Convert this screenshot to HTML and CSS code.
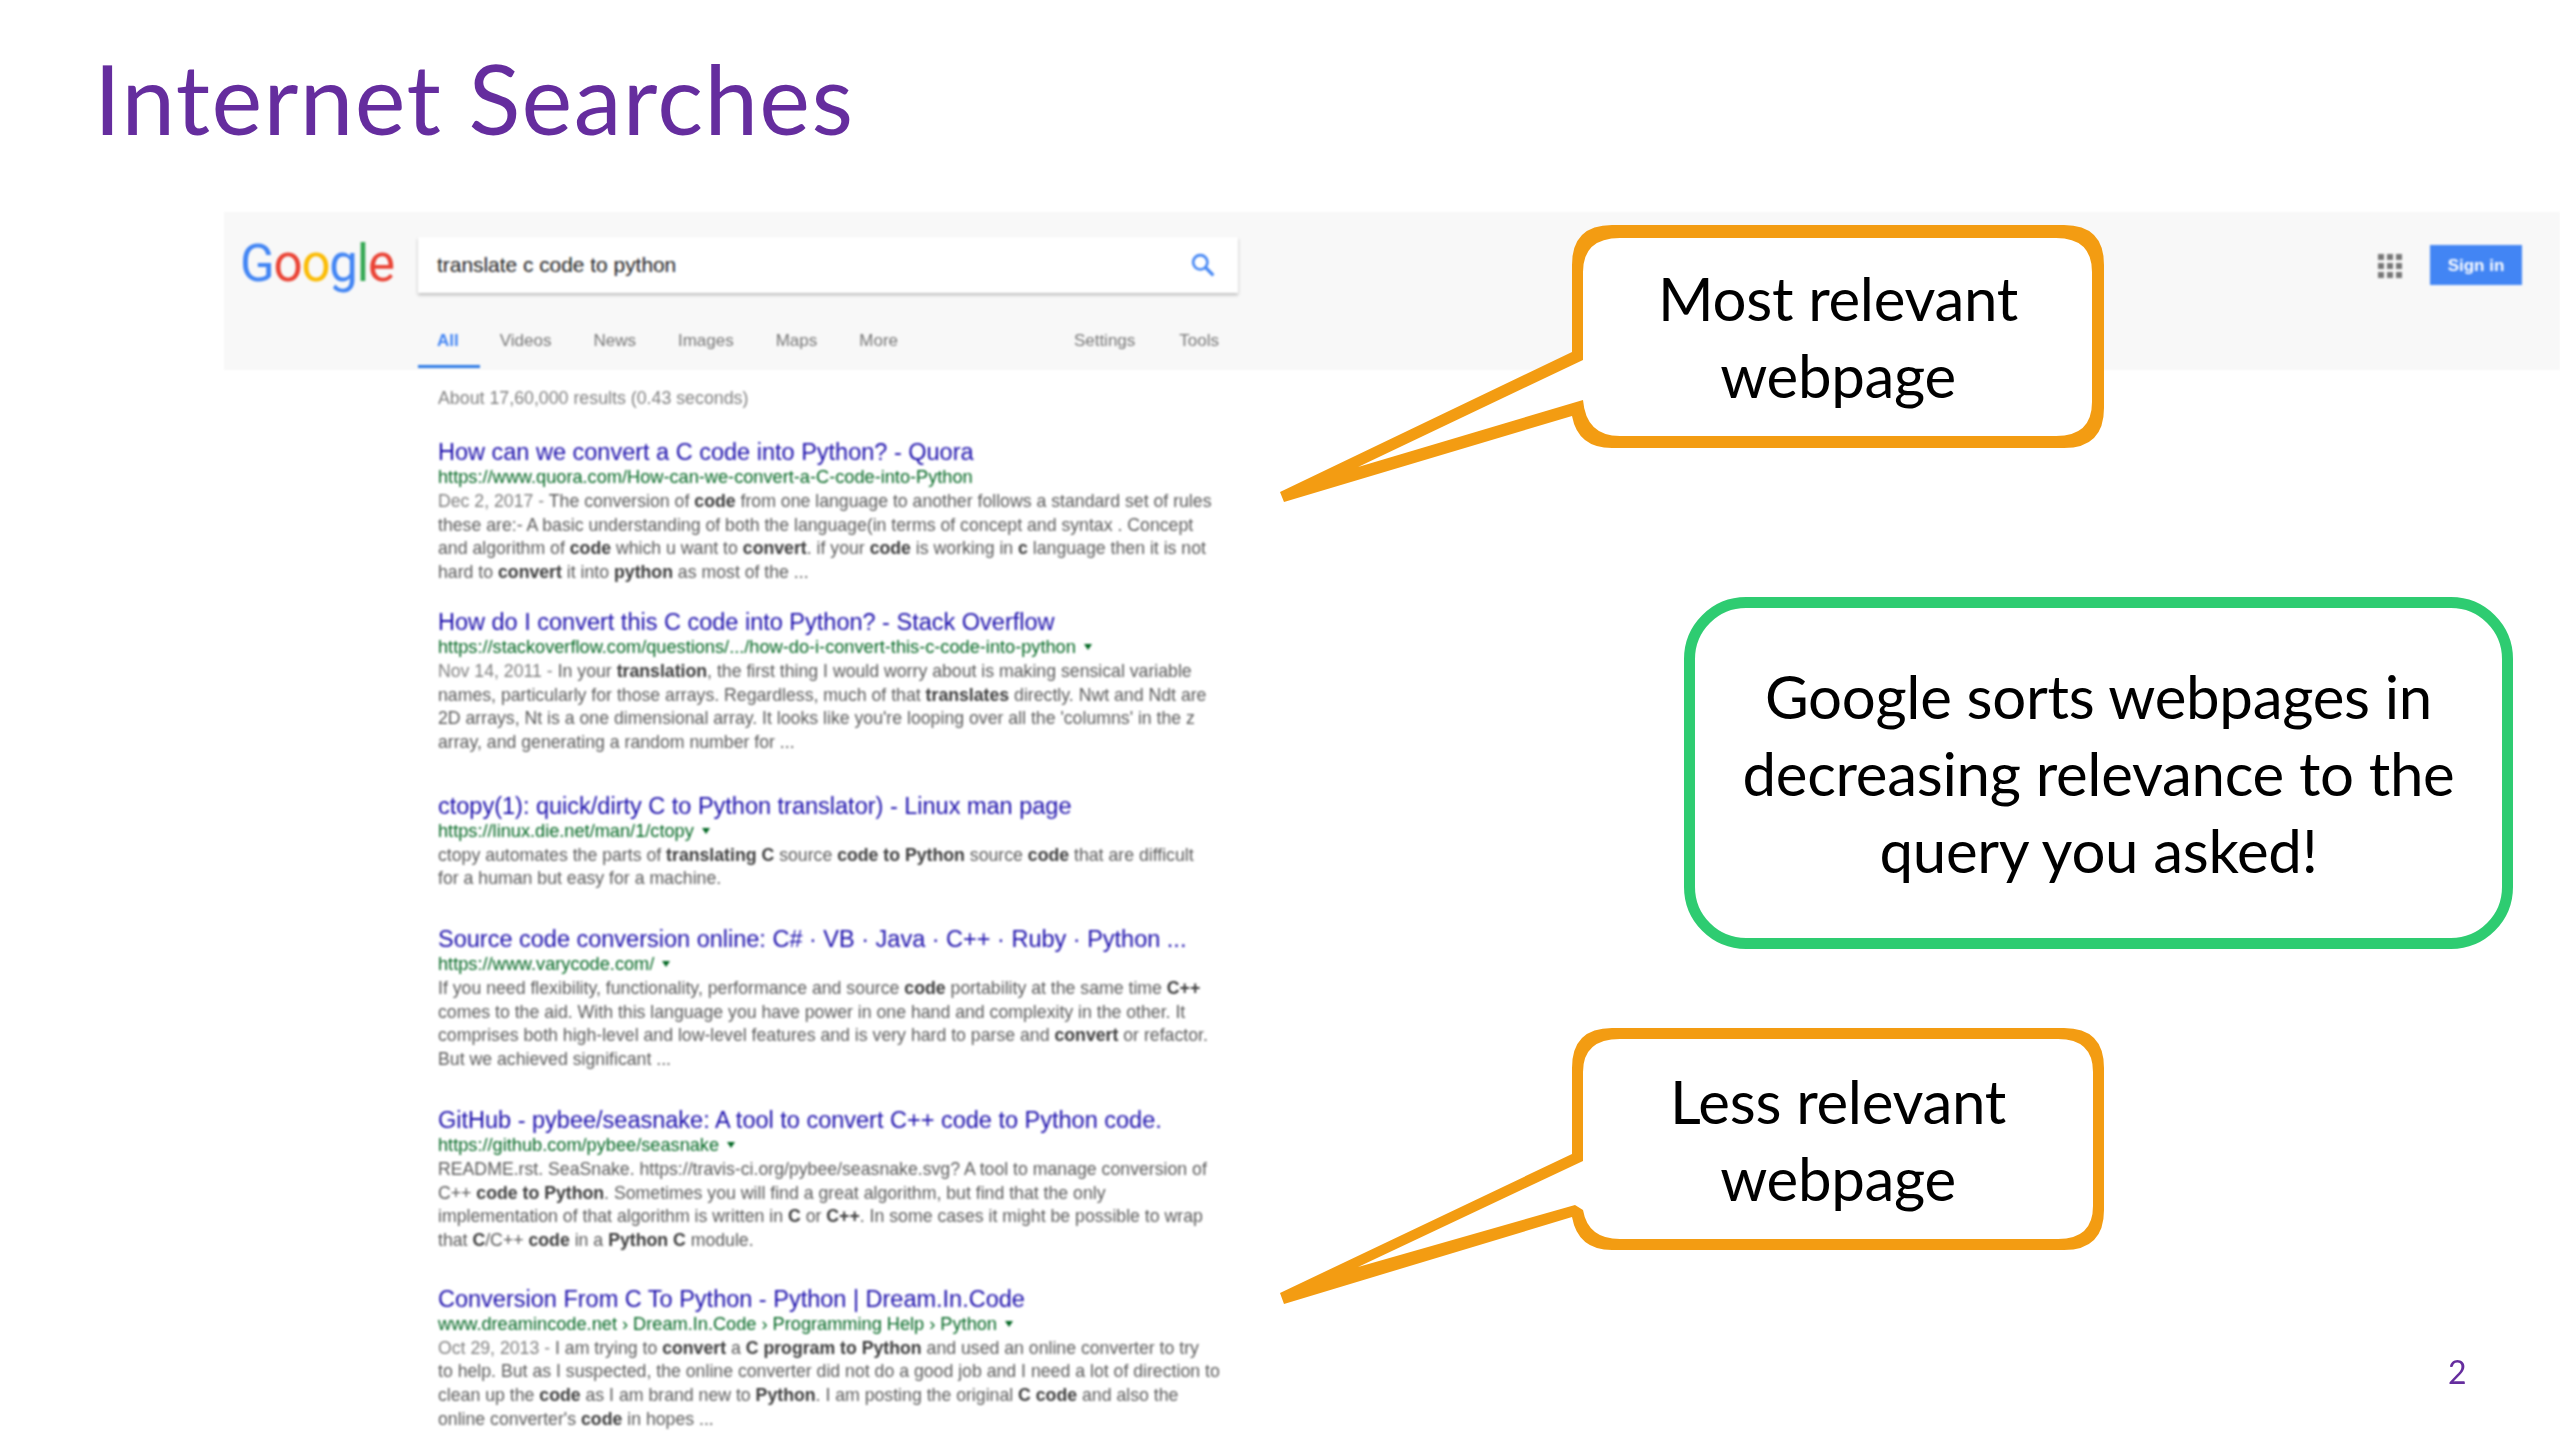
FILE: index.html
```html
<!DOCTYPE html>
<html lang="en">
<head>
<meta charset="utf-8">
<title>Internet Searches</title>
<link rel="stylesheet" href="styles.css">
</head>
<body>
<main class="slide">
  <h1 class="slide-title">Internet Searches</h1>
  <section class="shot">
    <header class="serp-head">
      <div class="top-row">
        <div class="logo"><span class="g-blue">G</span><span class="g-red">o</span><span class="g-yellow">o</span><span class="g-blue">g</span><span class="g-green">l</span><span class="g-red">e</span></div>
        <div class="search-box">
          <span class="query">translate c code to python</span>
          <svg class="search-icon" viewBox="0 0 24 24" width="26" height="26"><circle cx="9.5" cy="9.5" r="6.6" fill="none" stroke="#4285f4" stroke-width="2.4"/><path d="M14.5 14.5L21.5 21.5" stroke="#4285f4" stroke-width="3" fill="none"/></svg>
        </div>
        <div class="apps">
          <i></i><i></i><i></i><i></i><i></i><i></i><i></i><i></i><i></i>
        </div>
        <div class="sign-in">Sign in</div>
      </div>
      <nav class="tabs">
        <span class="tab tab-active">All</span>
        <span class="tab">Videos</span>
        <span class="tab">News</span>
        <span class="tab">Images</span>
        <span class="tab">Maps</span>
        <span class="tab">More</span>
        <span class="tab tab-settings">Settings</span>
        <span class="tab tab-last">Tools</span>
      </nav>
    </header>
    <div class="results">
      <p class="count">About 17,60,000 results (0.43 seconds)</p>
      <article class="result result-first">
        <h2 class="r-title">How can we convert a C code into Python? - Quora</h2>
        <div class="r-url">https://www.quora.com/How-can-we-convert-a-C-code-into-Python</div>
        <p class="r-snip"><span class="r-date">Dec 2, 2017 - </span>The conversion of <b>code</b> from one language to another follows a standard set of rules<br>these are:- A basic understanding of both the language(in terms of concept and syntax . Concept<br>and algorithm of <b>code</b> which u want to <b>convert</b>. if your <b>code</b> is working in <b>c</b> language then it is not<br>hard to <b>convert</b> it into <b>python</b> as most of the ...</p>
      </article>
      <article class="result result-second">
        <h2 class="r-title">How do I convert this C code into Python? - Stack Overflow</h2>
        <div class="r-url">https://stackoverflow.com/questions/.../how-do-i-convert-this-c-code-into-python<span class="caret"></span></div>
        <p class="r-snip"><span class="r-date">Nov 14, 2011 - </span>In your <b>translation</b>, the first thing I would worry about is making sensical variable<br>names, particularly for those arrays. Regardless, much of that <b>translates</b> directly. Nwt and Ndt are<br>2D arrays, Nt is a one dimensional array. It looks like you're looping over all the 'columns' in the z<br>array, and generating a random number for ...</p>
      </article>
      <article class="result">
        <h2 class="r-title">ctopy(1): quick/dirty C to Python translator) - Linux man page</h2>
        <div class="r-url">https://linux.die.net/man/1/ctopy<span class="caret"></span></div>
        <p class="r-snip">ctopy automates the parts of <b>translating C</b> source <b>code to Python</b> source <b>code</b> that are difficult<br>for a human but easy for a machine.</p>
      </article>
      <article class="result">
        <h2 class="r-title">Source code conversion online: C# · VB · Java · C++ · Ruby · Python ...</h2>
        <div class="r-url">https://www.varycode.com/<span class="caret"></span></div>
        <p class="r-snip">If you need flexibility, functionality, performance and source <b>code</b> portability at the same time <b>C++</b><br>comes to the aid. With this language you have power in one hand and complexity in the other. It<br>comprises both high-level and low-level features and is very hard to parse and <b>convert</b> or refactor.<br>But we achieved significant ...</p>
      </article>
      <article class="result">
        <h2 class="r-title">GitHub - pybee/seasnake: A tool to convert C++ code to Python code.</h2>
        <div class="r-url">https://github.com/pybee/seasnake<span class="caret"></span></div>
        <p class="r-snip">README.rst. SeaSnake. https://travis-ci.org/pybee/seasnake.svg? A tool to manage conversion of<br>C++ <b>code to Python</b>. Sometimes you will find a great algorithm, but find that the only<br>implementation of that algorithm is written in <b>C</b> or <b>C++</b>. In some cases it might be possible to wrap<br>that <b>C</b>/C++ <b>code</b> in a <b>Python C</b> module.</p>
      </article>
      <article class="result">
        <h2 class="r-title">Conversion From C To Python - Python | Dream.In.Code</h2>
        <div class="r-url">www.dreamincode.net › Dream.In.Code › Programming Help › Python<span class="caret"></span></div>
        <p class="r-snip"><span class="r-date">Oct 29, 2013 - </span>I am trying to <b>convert</b> a <b>C program to Python</b> and used an online converter to try<br>to help. But as I suspected, the online converter did not do a good job and I need a lot of direction to<br>clean up the <b>code</b> as I am brand new to <b>Python</b>. I am posting the original <b>C code</b> and also the<br>online converter's <b>code</b> in hopes ...</p>
      </article>
    </div>
  </section>

  <aside class="callout callout-most">
    <svg class="callout-shape" viewBox="1270 215 850 300" width="850" height="300">
      <path class="shape-line" d="M1612 225H2064Q2104 225 2104 265V408Q2104 448 2064 448H1612Q1578 448 1572 416L1284 502L1280 492L1572 352V265Q1572 225 1612 225Z"/>
      <path class="shape-fill" d="M1620 238H2056Q2092 238 2092 272V402Q2092 436 2056 436H1620Q1586 436 1583 400L1358 467L1583 360V272Q1583 238 1620 238Z"/>
    </svg>
    <p class="callout-text">Most relevant<br>webpage</p>
  </aside>

  <aside class="callout-box">
    <p class="callout-box-text">Google sorts webpages in<br>decreasing relevance to the<br>query you asked!</p>
  </aside>

  <aside class="callout callout-less">
    <svg class="callout-shape" viewBox="1270 1018 850 300" width="850" height="300">
      <path class="shape-line" d="M1612 1028H2064Q2104 1028 2104 1068V1210Q2104 1250 2064 1250H1612Q1578 1250 1572 1217L1284 1304L1280 1293L1572 1154V1068Q1572 1028 1612 1028Z"/>
      <path class="shape-fill" d="M1620 1039H2058Q2093 1039 2093 1072V1206Q2093 1239 2058 1239H1620Q1588 1239 1583 1210L1575 1205L1358 1267L1583 1161V1072Q1583 1039 1620 1039Z"/>
    </svg>
    <p class="callout-text">Less relevant<br>webpage</p>
  </aside>

  <span class="page-num">2</span>
</main>
</body>
</html>
```

FILE: styles.css
```css
* { box-sizing: border-box; }
html, body { margin: 0; padding: 0; background: #fff; }
.slide {
  position: relative;
  width: 2560px;
  height: 1440px;
  overflow: hidden;
  background: #fff;
  display: flex;
  flex-direction: column;
}
.slide-title {
  margin: 0;
  height: 212px;
  padding: 42px 0 0 94px;
  font: 400 96px/112px Lato, sans-serif;
  letter-spacing: 1.4px;
  color: #652d9e;
  filter: blur(0.6px);
}
.shot {
  margin-left: 224px;
  font-family: "Liberation Sans", Arial, sans-serif;
  filter: blur(0.9px);
}
.serp-head { background: #f8f8f8; height: 158px; }
.top-row {
  display: flex;
  align-items: flex-start;
  padding-top: 25px;
  height: 81px;
}
.logo {
  width: 194px;
  padding-left: 16px;
  font: 400 51px/54px Roboto, sans-serif;
  letter-spacing: -1.2px;
}
.g-blue { color: #4285f4; }
.g-red { color: #ea4335; }
.g-yellow { color: #fbbc05; }
.g-green { color: #34a853; }
.search-box {
  width: 820px;
  height: 56px;
  background: #fff;
  box-shadow: 0 2px 3px rgba(0,0,0,.25);
  display: flex;
  align-items: center;
  justify-content: space-between;
  padding: 0 22px 0 19px;
}
.query { font-size: 20.9px; color: #222; }
.apps {
  margin: 17px 28px 0 auto;
  width: 24px;
  height: 24px;
  display: grid;
  grid-template-columns: repeat(3, 6px);
  grid-template-rows: repeat(3, 6px);
  gap: 3px;
}
.apps i { background: #777; }
.sign-in {
  width: 92px;
  height: 40px;
  margin: 8px 38px 0 0;
  background: #4285f4;
  color: #fff;
  font-size: 17px;
  font-weight: 700;
  line-height: 41px;
  text-align: center;
}
.tabs {
  display: flex;
  margin-left: 194px;
  width: 801px;
  height: 75px;
}
.tab {
  padding-top: 37px;
  margin-right: 42px;
  font-size: 17px;
  line-height: 22px;
  color: #777;
}
.tab-active {
  padding: 37px 21px 0 19px;
  margin-right: 20px;
  color: #4285f4;
  font-weight: 700;
  border-bottom: 3px solid #2f7be6;
}
.tab-settings { margin-left: auto; margin-right: 44px; }
.tab-last { margin-right: 0; }
.results { padding: 16px 0 0 214px; }
.count { margin: 0; font-size: 17.8px; line-height: 24px; color: #808080; }
.result { margin-top: 35px; }
.result-first { margin-top: 29px; }
.result-second { margin-top: 24px; }
.result:nth-child(4) { margin-top: 38px; }
.result:last-child { margin-top: 33px; }
.r-title {
  margin: 0;
  font-size: 23.5px;
  font-weight: 400;
  line-height: 26px;
  color: #1a0dab;
  white-space: nowrap;
}
.r-url {
  font-size: 18.2px;
  line-height: 24px;
  color: #006621;
  white-space: nowrap;
}
.caret {
  display: inline-block;
  margin-left: 8px;
  vertical-align: 3px;
  border-left: 4px solid transparent;
  border-right: 4px solid transparent;
  border-top: 6px solid #006621;
}
.r-snip {
  margin: 0;
  padding-top: 1px;
  font-size: 17.7px;
  line-height: 23.7px;
  color: #5a5a5a;
  white-space: nowrap;
}
.r-snip b { color: #3a3a3a; }
.r-date { color: #808080; }
.callout { position: absolute; width: 850px; height: 300px; left: 1270px; }
.callout-most { top: 215px; }
.callout-less { top: 1018px; }
.callout-shape { position: absolute; left: 0; top: 0; display: block; }
.shape-line { fill: #f39c12; }
.shape-fill { fill: #fff; }
.callout-text {
  position: absolute;
  left: 302px;
  top: 45px;
  width: 532px;
  margin: 0;
  font: 400 60px/77px Lato, sans-serif;
  letter-spacing: -0.3px;
  color: #000;
  text-align: center;
}
.callout-box {
  position: absolute;
  left: 1684px;
  top: 597px;
  width: 829px;
  height: 352px;
  border: 11px solid #2ecc71;
  border-radius: 62px;
  background: #fff;
  display: flex;
  align-items: center;
  justify-content: center;
}
.callout-box-text {
  margin: 0;
  font: 400 60px/77px Lato, sans-serif;
  letter-spacing: -0.3px;
  color: #000;
  text-align: center;
  white-space: nowrap;
}
.page-num {
  position: absolute;
  left: 2448px;
  top: 1354px;
  font: 400 32px/36px Lato, sans-serif;
  color: #652d9e;
}
```
